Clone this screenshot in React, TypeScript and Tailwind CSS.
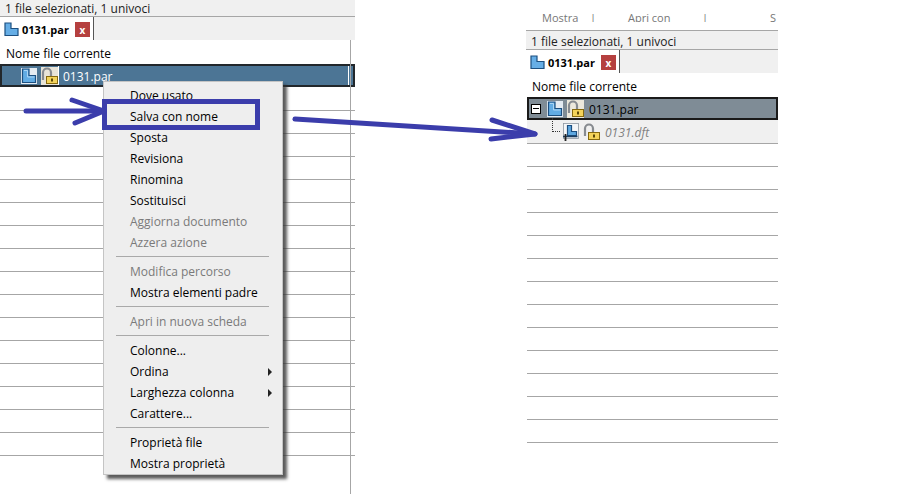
import React from 'react';

const PartIcon = ({ className = '' }: { className?: string }) => (
  <svg width="16" height="16" viewBox="0 0 16 16" className={className}>
    <rect x="0" y="0" width="16" height="16" fill="#e4ebf2" />
    <path d="M1.5 1v13.5h13V7.5H8V1z" fill="#62ace4" stroke="#1c4f80" strokeWidth="1.2" />
    <path d="M3 2.5h3.5v6.5h7" fill="none" stroke="#a9d4f5" strokeWidth="1" />
  </svg>
);

const DraftIcon = () => (
  <svg width="17" height="18" viewBox="0 0 17 18">
    <rect x="1.5" y="0.5" width="15" height="15" fill="#f4f6f8" stroke="#8d97a1" strokeWidth="0.8" />
    <path d="M5.5 2.5h4v6h5v4h-9z" fill="#5ea8e0" stroke="#1c4f80" strokeWidth="1.2" />
    <path d="M1 13.5h14.5" stroke="#1c3f60" strokeWidth="1.6" />
    <path d="M3.5 11v7" stroke="#222" strokeWidth="1.8" />
  </svg>
);

const LockIcon = ({ bg = '' }: { bg?: string }) => (
  <svg width="17" height="18" viewBox="0 0 17 18" className={bg}>
    <path d="M2 13V5.5a4 4 0 0 1 8 0V9" fill="none" stroke="#878b90" strokeWidth="2.2" />
    <rect x="5.5" y="9.5" width="11" height="7" fill="#f3d35a" stroke="#86690e" strokeWidth="1" />
    <rect x="10" y="11.5" width="2" height="3" fill="#5a4708" />
  </svg>
);

const TabStrip = () => (
  <div className="flex h-[23px] items-start bg-[#f0f0f0]">
    <div className="flex h-[23px] items-center bg-white pt-[2px] pl-[4px]">
      <svg width="15" height="15" viewBox="0 0 15 15">
        <path d="M1 1v12.5h13V6.5H7V1z" fill="#66aee6" stroke="#1c4f80" strokeWidth="1.2" />
      </svg>
      <span className="ml-[3px] w-[53px] text-[11px] leading-none font-bold text-black">0131.par</span>
      <span className="flex h-[15px] w-[15px] items-center justify-center bg-[#b5403f] text-[10px] leading-none font-bold text-white">x</span>
      <span className="mt-[-2px] ml-[3px] h-[23px] w-px bg-[#555555]" />
    </div>
  </div>
);

const Row = () => <div className="h-[23px] border-b border-[#a6a6a6]" />;

const MenuItem = ({ label, off = false, sub = false }: { label: string; off?: boolean; sub?: boolean }) => (
  <div className={`flex h-[21px] items-center justify-between pr-[10px] pl-[26px] text-[12px] ${off ? 'text-[#7a7a7a]' : 'text-black'}`}>
    <span>{label}</span>
    {sub && <span className="h-0 w-0 border-y-[4px] border-l-[4px] border-y-transparent border-l-[#222222]" />}
  </div>
);

const MenuLine = () => <div className="mt-[2px] mr-[13px] mb-[4px] ml-[12px] h-[2px] border-b border-[#a9a9a9]" />;

const App = () => {
  return (
    <div className="relative flex h-[494px] w-[899px] overflow-hidden bg-white font-['Open_Sans','Liberation_Sans',sans-serif]">
      {/* left capture */}
      <div className="w-[355px]">
        <div className="flex h-[17px] items-center border-b border-[#a6a6a6] bg-[#f0f0f0] pt-[2px] pl-[5px] text-[12px] text-[#222222]">1 file selezionati, 1 univoci</div>
        <TabStrip />
        <div className="relative h-[454px]">
          <div className="absolute top-0 bottom-0 left-[350px] w-px bg-[#a6a6a6]" />
          <div className="flex h-[24px] items-center pt-[3px] pl-[6px] text-[12px] text-black">Nome file corrente</div>
          <div className="flex h-[23px] items-center border-2 border-[#22272b] bg-[#4c7595] pl-[19px]">
            <PartIcon />
            <span className="ml-[4px]"><LockIcon bg="bg-[#e8e4d8]" /></span>
            <span className="mr-[4px] flex h-full flex-1 items-center border-x border-white bg-[#4c7595] pt-[3px] pl-[4px] text-[12px] text-white">0131.par</span>
          </div>
          <div className="h-px" />
          {Array.from({ length: 16 }).map((_, i) => (
            <Row key={i} />
          ))}
        </div>
      </div>

      {/* right capture */}
      <div className="ml-[171px] w-[252px]">
        <div className="h-[31px] border-b border-[#a6a6a6]">
          <div className="flex h-[22px] items-start overflow-hidden pt-[11px] pl-[16px] text-[11px] leading-[13px] text-[#777777]">
            <span className="w-[48px]">Mostra</span>
            <span className="w-[38px]">|</span>
            <span className="w-[74px]">Apri con</span>
            <span className="w-[68px]">|</span>
            <span>S</span>
          </div>
        </div>
        <div className="flex h-[19px] items-center border-b border-[#a6a6a6] bg-[#f0f0f0] pt-[3px] pl-[5px] text-[12px] text-[#222222]">1 file selezionati, 1 univoci</div>
        <TabStrip />
        <div className="flex h-[24px] items-center pt-[4px] pl-[6px] text-[12px] text-black">Nome file corrente</div>
        <div className="ml-px flex h-[23px] items-center border-2 border-[#1a1a1a] bg-[#7f8c96] pl-[2px]">
          <span className="flex h-[10px] w-[10px] items-center justify-center border border-black bg-white">
            <span className="h-px w-[6px] bg-black" />
          </span>
          <PartIcon className="ml-[6px]" />
          <span className="ml-[4px]"><LockIcon bg="bg-[#ece8dc]" /></span>
          <span className="ml-[5px] pt-[3px] text-[12px] text-black">0131.par</span>
        </div>
        <div className="relative ml-px flex h-[24px] items-center border-b border-[#a6a6a6] bg-[#f0f0f0] pl-[35px]">
          <span className="absolute top-[-2px] left-[25px] h-[14px] w-[8px] border-b border-l border-dotted border-[#333333]" />
          <DraftIcon />
          <span className="ml-[4px]"><LockIcon /></span>
          <span className="ml-[5px] pt-[3px] text-[12px] text-[#808080] italic">0131.dft</span>
        </div>
        <div className="ml-px">
          {Array.from({ length: 13 }).map((_, i) => (
            <Row key={i} />
          ))}
        </div>
      </div>

      {/* context menu */}
      <div className="absolute top-[81px] left-[103px] h-[394px] w-[180px] border border-[#c4c4c4] bg-[#eeeeee] pt-[3px] shadow-[4px_4px_3px_rgba(50,50,50,0.8)]">
        <MenuItem label="Dove usato" />
        <MenuItem label="Salva con nome" />
        <MenuItem label="Sposta" />
        <MenuItem label="Revisiona" />
        <MenuItem label="Rinomina" />
        <MenuItem label="Sostituisci" />
        <MenuItem label="Aggiorna documento" off />
        <MenuItem label="Azzera azione" off />
        <MenuLine />
        <MenuItem label="Modifica percorso" off />
        <MenuItem label="Mostra elementi padre" />
        <MenuLine />
        <MenuItem label="Apri in nuova scheda" off />
        <MenuLine />
        <MenuItem label="Colonne..." />
        <MenuItem label="Ordina" sub />
        <MenuItem label="Larghezza colonna" sub />
        <MenuItem label="Carattere..." />
        <MenuLine />
        <MenuItem label="Proprietà file" />
        <MenuItem label="Mostra proprietà" />
      </div>

      {/* hand drawn annotations */}
      <div className="absolute top-[99px] left-[102px] h-[31px] w-[158px] border-[5px] border-[#3b3dab]" />
      <svg width="899" height="494" viewBox="0 0 899 494" className="pointer-events-none absolute top-0 left-0">
        <g fill="none" stroke="#3b3dab" strokeWidth="5" strokeLinecap="round" strokeLinejoin="round">
          <path d="M26 111 L103 111" />
          <path d="M72 100 L104 111 L75 123" />
          <path d="M295 119 L535 134" />
          <path d="M492 120 L535 134 L491 139" />
        </g>
      </svg>
    </div>
  );
};

export default App;
